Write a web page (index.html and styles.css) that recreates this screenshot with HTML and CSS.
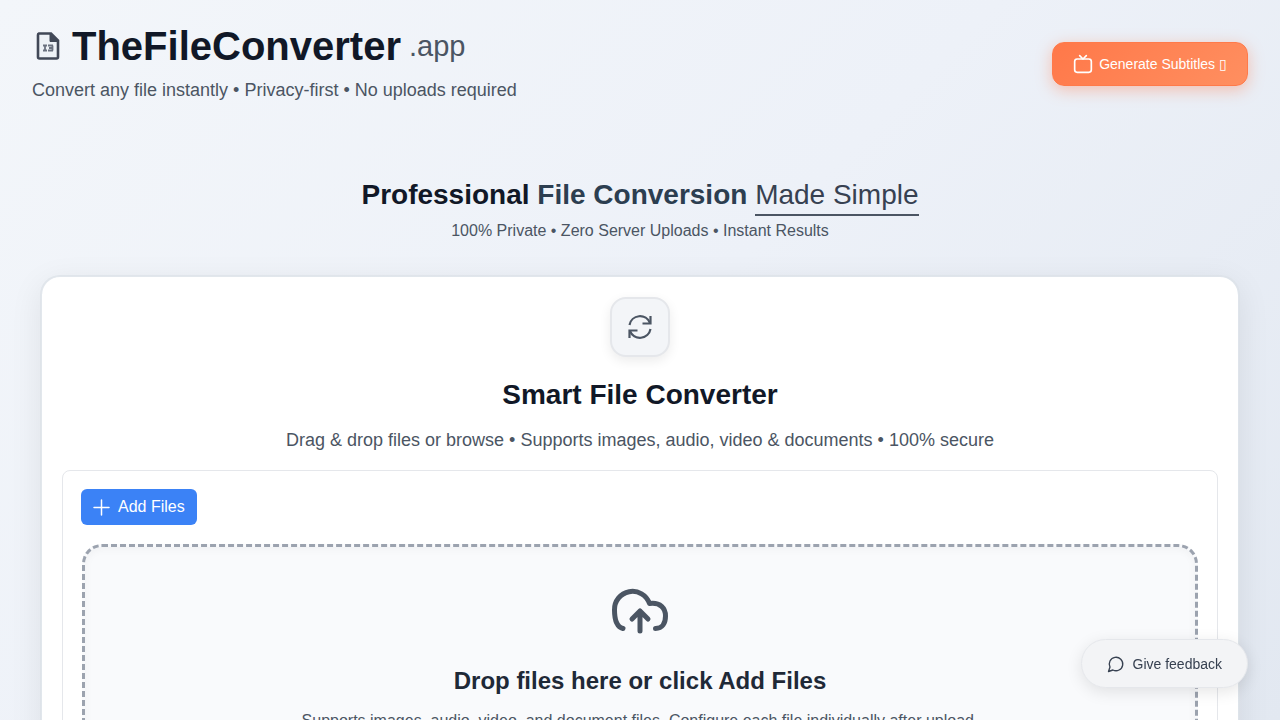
FILE: index.html
```
<!DOCTYPE html>
<html lang="en">
<head>
    <meta charset="UTF-8">
    <meta name="viewport" content="width=device-width, initial-scale=1.0">
    <title>TheFileConverter.app</title>
    <link rel="stylesheet" href="styles.css">
</head>
<body>
    <header class="header">
        <div class="brand">
            <h1 class="logo">
                <svg class="logo-icon" viewBox="0 0 24 30" fill="none" stroke="#414857">
                    <path d="M3 2.500h12l7 7v16.500a1.500 1.500 0 0 1-1.500 1.500H3.500A1.500 1.500 0 0 1 2 26V4a1.500 1.500 0 0 1 1-1.500z" stroke-width="2.600" fill="#eef2f7"/>
                    <path d="M14 2v8.500h8.500z" fill="#414857" stroke-width="1"/>
                    <path d="M7 14.500h4M7 19.500h4M9 14.500v5M12 14.500h5M13 17h4M12 19.500h5M16.500 14.500v5" stroke="#6b7280" stroke-width="1.800"/>
                </svg>
                <span class="logo-name">TheFileConverter</span>
                <span class="logo-tld">.app</span>
            </h1>
            <p class="tagline">Convert any file instantly • Privacy-first • No uploads required</p>
        </div>
        <button type="button" class="subtitles-btn">
            <svg width="20" height="20" viewBox="0 0 24 24" fill="none" stroke="currentColor" stroke-width="2" stroke-linecap="round" stroke-linejoin="round">
                <rect x="2" y="6" width="20" height="16" rx="3"/>
                <path d="M16 2l-4 4-4-4"/>
            </svg>
            <span>Generate Subtitles &#x25AF;</span>
        </button>
    </header>

    <main class="main">
        <section class="hero">
            <h2 class="hero-title">Professional <span class="accent">File Conversion</span> <span class="underlined">Made Simple</span></h2>
            <p class="hero-text">100% Private • Zero Server Uploads • Instant Results</p>
        </section>

        <section class="card">
            <div class="card-icon">
                <svg width="28" height="28" viewBox="0 0 28 28" fill="none" stroke="#4b5563" stroke-width="2.200">
                    <path d="M3.500 12a10.700 10.700 0 0 1 20.500-2"/>
                    <path d="M24.500 3v7.500h-8"/>
                    <path d="M24.500 16a10.700 10.700 0 0 1-20.500 2"/>
                    <path d="M3.500 25v-7.500h8"/>
                </svg>
            </div>
            <h2 class="card-title">Smart File Converter</h2>
            <p class="card-text">Drag &amp; drop files or browse • Supports images, audio, video &amp; documents • 100% secure</p>

            <div class="uploader">
                <button type="button" class="add-btn">
                    <svg width="17" height="17" viewBox="0 0 17 17" fill="none" stroke="currentColor" stroke-width="1.500" stroke-linecap="round">
                        <path d="M8.500 1v15M1 8.500h15"/>
                    </svg>
                    <span>Add Files</span>
                </button>
                <div class="dropzone">
                    <svg width="64" height="64" viewBox="0 0 64 64" fill="none" stroke="#4b5563" stroke-width="5" stroke-linecap="round" stroke-linejoin="round">
                        <path d="M15 49.500C9 48 6.500 42 6.500 31a18 18 0 0 1 35-6.500c11-1.500 16 5 16 12.500 0 7-3 12.500-10 12.500"/>
                        <path d="M32 52V32M24 40l8-8 8 8"/>
                    </svg>
                    <h3 class="drop-title">Drop files here or click Add Files</h3>
                    <p class="drop-text">Supports images, audio, video, and document files. Configure each file individually after upload.</p>
                </div>
            </div>
        </section>
    </main>

    <button type="button" class="feedback-btn">
        <svg width="18" height="18" viewBox="0 0 24 24" fill="none" stroke="currentColor" stroke-width="1.800" stroke-linecap="round" stroke-linejoin="round">
            <path d="M7.900 20A9 9 0 1 0 4 16.100L2 22z"/>
        </svg>
        <span>Give feedback</span>
    </button>
</body>
</html>
```

FILE: styles.css
```
* {
    box-sizing: border-box;
}

body {
    margin: 0;
    min-height: 100vh;
    font-family: "Liberation Sans", Arial, sans-serif;
    color: #4b5563;
    background: linear-gradient(135deg, #f3f6fa 0%, #edf1f8 50%, #e2e8f1 100%) fixed;
}

h1, h2, h3, p {
    margin: 0;
}

button {
    font-family: inherit;
    cursor: pointer;
}

.header {
    display: flex;
    justify-content: space-between;
    align-items: center;
    padding: 24px 32px;
}

.logo {
    display: flex;
    align-items: center;
    gap: 8px;
    line-height: 44px;
}

.logo-icon {
    width: 24px;
    height: 30px;
    margin: 0 4px;
}

.logo-name {
    font-size: 40px;
    color: #111827;
}

.logo-tld {
    font-size: 29px;
    line-height: 42px;
    font-weight: 400;
}

.tagline {
    margin-top: 8px;
    font-size: 18px;
    line-height: 28px;
}

.subtitles-btn {
    display: flex;
    align-items: center;
    gap: 6px;
    height: 44px;
    padding: 0 20px;
    border: 1px solid #ff7a4a;
    border-radius: 12px;
    background: linear-gradient(135deg, #ff7849, #ff8f60);
    box-shadow: 0 4px 16px rgba(255, 120, 73, 0.4);
    color: #fff;
    font-size: 14px;
}

.main {
    padding: 47px 40px;
}

.hero {
    text-align: center;
}

.hero-title {
    font-size: 28px;
    line-height: 40px;
    color: #111827;
}

.accent {
    color: #2c3e50;
}

.underlined {
    padding-bottom: 4px;
    border-bottom: 2px solid #4b5563;
    font-weight: 400;
    color: #374151;
}

.hero-text {
    margin-top: 4px;
    font-size: 16px;
    line-height: 24px;
}

.card {
    display: flex;
    flex-direction: column;
    align-items: center;
    margin-top: 32px;
    padding: 20px;
    border: 2px solid rgba(220, 225, 231, 0.7);
    border-radius: 20px;
    background: #fff;
    background-clip: padding-box;
    box-shadow: 0 8px 32px rgba(0, 0, 0, 0.08);
    text-align: center;
}

.card-icon {
    display: flex;
    align-items: center;
    justify-content: center;
    width: 60px;
    height: 60px;
    border: 2px solid #e5e7eb;
    border-radius: 16px;
    background: #f3f5f8;
    box-shadow: 0 4px 12px rgba(0, 0, 0, 0.08);
}

.card-title {
    margin-top: 20px;
    font-size: 28px;
    line-height: 36px;
    color: #111827;
}

.card-text {
    margin-top: 12px;
    font-size: 18px;
    line-height: 30px;
}

.uploader {
    align-self: stretch;
    margin-top: 15px;
    padding: 18px;
    border: 1px solid #e5e7eb;
    border-radius: 8px;
}

.add-btn {
    display: flex;
    align-items: center;
    gap: 8px;
    height: 36px;
    padding: 0 12px;
    border: none;
    border-radius: 6px;
    background: #3b82f6;
    color: #fff;
    font-size: 16px;
}

.dropzone {
    display: flex;
    flex-direction: column;
    align-items: center;
    margin: 19px 1px 0;
    padding: 32px;
    border: 3px dashed #9ca3af;
    border-radius: 20px;
    background: #f9fafc;
    box-shadow: inset 0 2px 8px rgba(0, 0, 0, 0.04);
}

.drop-title {
    margin-top: 22px;
    font-size: 24px;
    line-height: 32px;
    color: #1f2937;
}

.drop-text {
    margin-top: 12px;
    font-size: 16px;
    line-height: 24px;
}

.feedback-btn {
    position: fixed;
    right: 32px;
    bottom: 32px;
    display: flex;
    align-items: center;
    gap: 8px;
    height: 49px;
    padding: 0 25px;
    border: 1px solid #e5e7eb;
    border-radius: 25px;
    background: #f3f4f6;
    box-shadow: 0 4px 16px rgba(0, 0, 0, 0.1);
    color: #374151;
    font-size: 14px;
}
```
